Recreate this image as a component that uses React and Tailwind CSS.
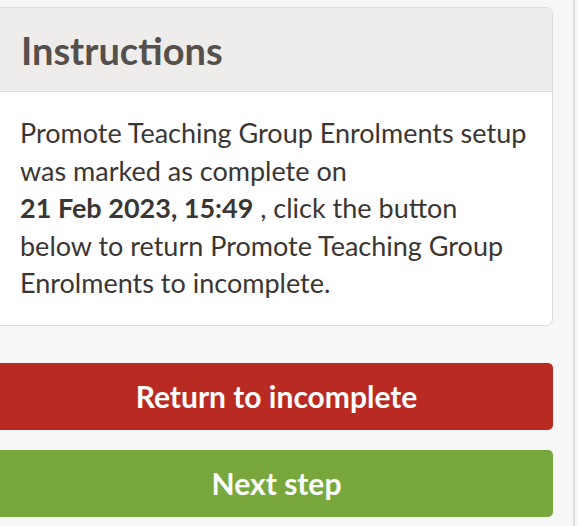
export default function App() {
  return (
    <div
      className="w-[578px] h-[526px] overflow-hidden bg-[#f7f7f7] flex"
      style={{ fontFamily: 'Lato, "Open Sans", sans-serif' }}
    >
      <div className="w-[573px] shrink-0 flex flex-col pt-[7px]">
        <div className="ml-[-8px] w-[561px] flex flex-col">
          <section className="rounded-[7px] border-[1.5px] border-[#dcdcdc] bg-white overflow-hidden">
            <header className="h-[84px] bg-[#eeedeb] border-b-[1.5px] border-[#dcdcdc] flex items-center pl-[28px]">
              <h2 className="text-[38px] font-bold text-[#56504c] leading-none">Instructions</h2>
            </header>
            <div className="pl-[27px] pr-[16px] pt-[22px] pb-[23px] text-[27px] leading-[37.5px] text-[#3a3634] whitespace-nowrap">
              <div>Promote Teaching Group Enrolments setup</div>
              <div>was marked as complete on</div>
              <div>
                <strong className="font-bold">21 Feb 2023, 15:49</strong> , click the button
              </div>
              <div>below to return Promote Teaching Group</div>
              <div>Enrolments to incomplete.</div>
            </div>
          </section>
          <div className="flex flex-col gap-[20px] mt-[37px]">
            <button className="h-[67px] rounded-[5px] bg-[#b92b22] text-white text-[30px] font-bold flex items-center justify-center pl-[8px]">
              Return to incomplete
            </button>
            <button className="h-[67px] rounded-[5px] bg-[#78a83d] text-white text-[30px] font-bold flex items-center justify-center pl-[8px]">
              Next step
            </button>
          </div>
        </div>
      </div>
      <div className="w-[2px] shrink-0 bg-[#dedede]" />
      <div className="flex-1 bg-[#f7f7f7]" />
    </div>
  );
}
